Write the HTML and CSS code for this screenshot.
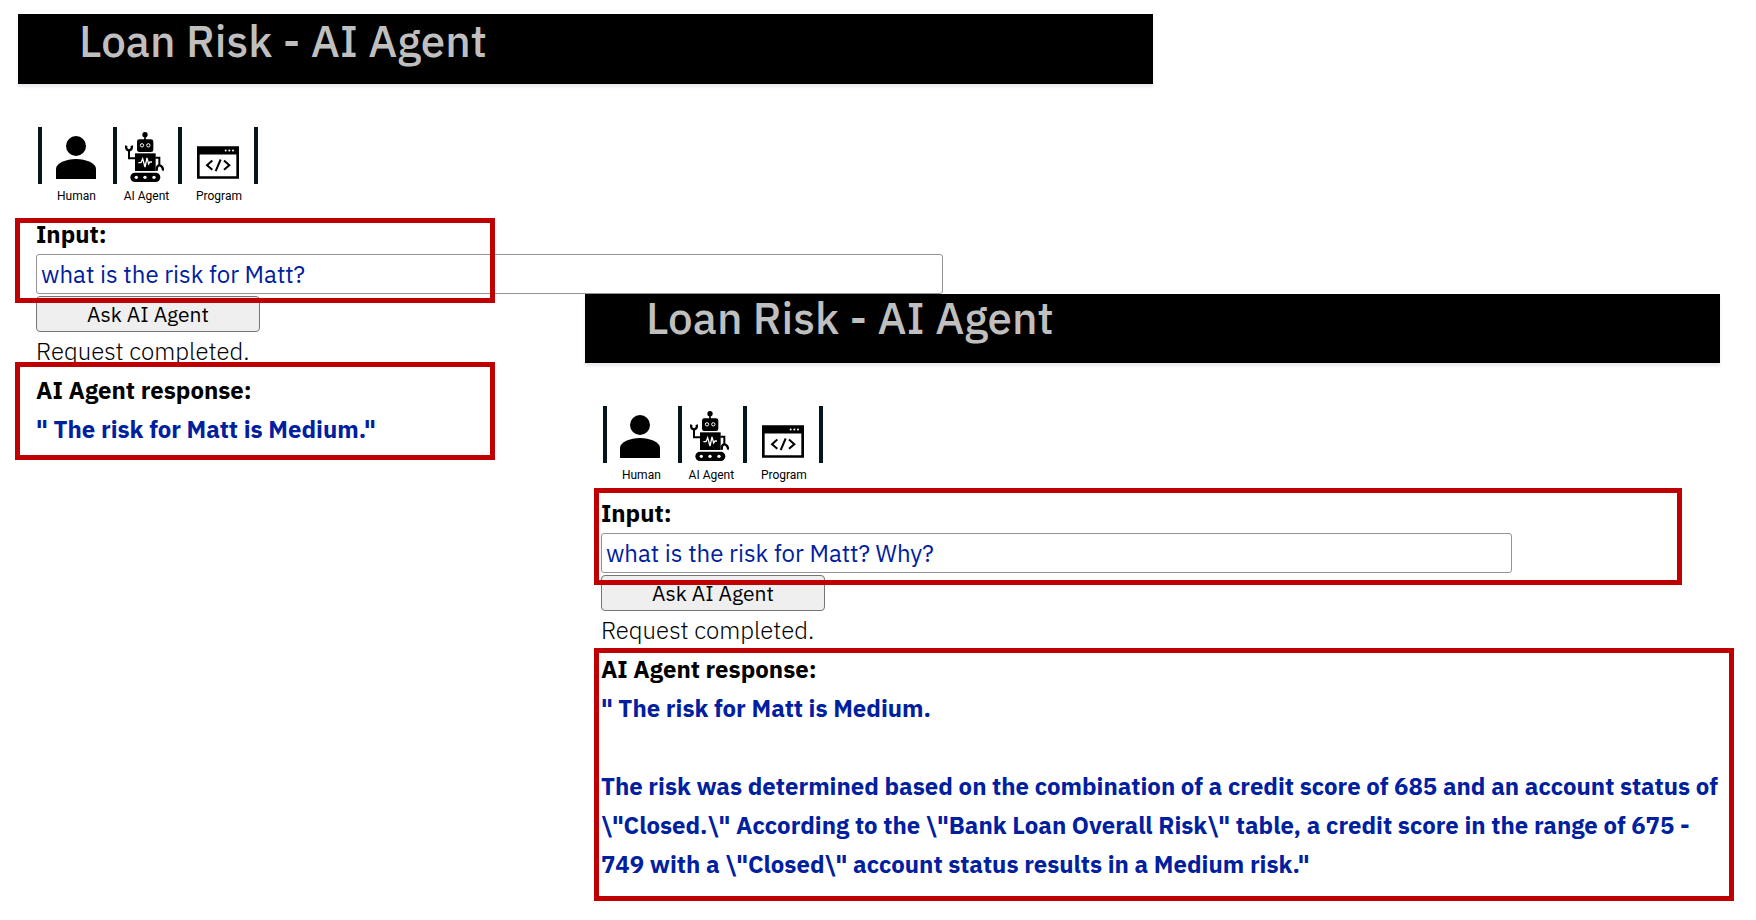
FILE: index.html
```
<!DOCTYPE html>
<html lang="en">
<head>
  <meta charset="utf-8">
  <title>Loan Risk - AI Agent</title>
  <link rel="stylesheet" href="styles.css">
</head>
<body>
  <svg class="sprite" aria-hidden="true">
    <symbol id="icon-human" viewBox="0 0 120 129" preserveAspectRatio="none">
      <ellipse cx="60" cy="30" rx="30" ry="30"/>
      <path d="M0 129V98C0 82 30 69 60 69s60 13 60 29v31z"/>
    </symbol>
    <symbol id="icon-robot" viewBox="0 0 117 150">
      <circle cx="60" cy="8" r="8"/>
      <path d="M60 8v18" stroke="#000" stroke-width="5"/>
      <rect x="36" y="22" width="49" height="38" rx="7"/>
      <g fill="none" stroke="#fff" stroke-width="3">
        <circle cx="51" cy="40" r="5"/>
        <circle cx="70" cy="40" r="5"/>
      </g>
      <rect x="30" y="64" width="62" height="53"/>
      <path d="M40 92h8l5-12 7 25 6-27 5 18 4-6h6" fill="none" stroke="#fff" stroke-width="4"/>
      <g fill="none" stroke="#000" stroke-width="6">
        <path d="M31 79H12V56"/>
        <path d="M4 41c-2 7 1 14 8 14s10-7 8-14" stroke-width="7"/>
        <path d="M91 77h12v22"/>
        <path d="M96 116c-2-8 1-16 7-16s12 8 11 16" stroke-width="7"/>
      </g>
      <rect x="16" y="122" width="90" height="28" rx="14"/>
      <g fill="#fff">
        <circle cx="34" cy="136" r="5"/>
        <circle cx="60" cy="136" r="5"/>
        <circle cx="87" cy="136" r="5"/>
      </g>
    </symbol>
    <symbol id="icon-program" viewBox="0 0 126 98">
      <path d="M0 0h126v98H0zM8 25v65h110V25z" fill-rule="evenodd"/>
      <g fill="#fff">
        <circle cx="86" cy="13" r="3"/>
        <circle cx="97" cy="13" r="3"/>
        <circle cx="108" cy="13" r="3"/>
      </g>
      <path d="M46 43L30 57l16 14M81 43l16 14-16 14M71 40L56 75" fill="none" stroke="#000" stroke-width="6"/>
    </symbol>
  </svg>

  <main class="stage">
    <section class="window window-first">
      <header class="titlebar"><h1 class="title">Loan Risk - AI Agent</h1></header>
      <div class="content">
        <ul class="legend">
          <li class="legend-item legend-human"><span class="legend-figure"><svg class="icon-human"><use href="#icon-human"/></svg></span><span class="legend-label">Human</span></li>
          <li class="legend-item legend-agent"><span class="legend-figure"><svg class="icon-robot"><use href="#icon-robot"/></svg></span><span class="legend-label">AI Agent</span></li>
          <li class="legend-item legend-program"><span class="legend-figure"><svg class="icon-program"><use href="#icon-program"/></svg></span><span class="legend-label">Program</span></li>
        </ul>
        <div class="prompt">
          <label class="heading" for="question-1">Input:</label>
          <input class="question" id="question-1" type="text" value="what is the risk for Matt?">
          <span class="highlight"></span>
        </div>
        <button class="ask" type="button">Ask AI Agent</button>
        <p class="status">Request completed.</p>
        <div class="response">
          <h2 class="heading">AI Agent response:</h2>
          <p class="answer">" The risk for Matt is Medium."</p>
          <span class="highlight"></span>
        </div>
      </div>
    </section>

    <section class="window window-second">
      <header class="titlebar"><h1 class="title">Loan Risk - AI Agent</h1></header>
      <div class="content">
        <ul class="legend">
          <li class="legend-item legend-human"><span class="legend-figure"><svg class="icon-human"><use href="#icon-human"/></svg></span><span class="legend-label">Human</span></li>
          <li class="legend-item legend-agent"><span class="legend-figure"><svg class="icon-robot"><use href="#icon-robot"/></svg></span><span class="legend-label">AI Agent</span></li>
          <li class="legend-item legend-program"><span class="legend-figure"><svg class="icon-program"><use href="#icon-program"/></svg></span><span class="legend-label">Program</span></li>
        </ul>
        <div class="prompt">
          <label class="heading" for="question-2">Input:</label>
          <input class="question" id="question-2" type="text" value="what is the risk for Matt? Why?">
          <span class="highlight"></span>
        </div>
        <button class="ask" type="button">Ask AI Agent</button>
        <p class="status">Request completed.</p>
        <div class="response">
          <h2 class="heading">AI Agent response:</h2>
          <p class="answer">" The risk for Matt is Medium.</p>
          <p class="answer answer-detail">The risk was determined based on the combination of a credit score of 685 and an account status of \"Closed.\" According to the \"Bank Loan Overall Risk\" table, a credit score in the range of 675 - 749 with a \"Closed\" account status results in a Medium risk."</p>
          <span class="highlight"></span>
        </div>
      </div>
    </section>
  </main>
</body>
</html>
```
FILE: styles.css
```
* {
  box-sizing: border-box;
}

body {
  margin: 0;
  background: #fff;
  color: #000;
  font-family: "IBM Plex Sans", Roboto, "Liberation Sans", sans-serif;
  font-size: 24px;
  line-height: 39px;
}

h1, h2, p, ul {
  margin: 0;
  padding: 0;
  font-size: inherit;
}

.sprite {
  display: none;
}

/* Both windows share one grid cell so that the second lies over the first. */
.stage {
  display: grid;
  align-items: start;
  padding: 14px 22px 20px 18px;
}

.window {
  grid-area: 1 / 1;
  width: 66.15%;
}

.window-second {
  justify-self: end;
  margin: 280px 14px 0 0;
}

.titlebar {
  height: 70px;
  padding-left: 61px;
  background: #000;
  box-shadow: 0 3px 3px #e9e9ef;
}

.title {
  color: #bfbfbf;
  font-size: 44px;
  font-weight: 500;
  line-height: 53px;
}

.window-second .titlebar {
  height: 69px;
}

.window-second .title {
  line-height: 48px;
}

.content {
  padding: 43px 0 0 18px;
}

.window-second .content {
  padding-left: 16px;
}

.legend {
  display: flex;
  margin: 0 0 9px 2px;
  list-style: none;
}

.legend-human {
  width: 75px;
}

.legend-agent {
  width: 65px;
}

.legend-program {
  width: 80px;
}

.legend-figure {
  display: flex;
  justify-content: center;
  align-items: flex-end;
  height: 57px;
  padding-bottom: 5px;
  border-left: 4px solid #06141c;
}

.legend-human .legend-figure {
  padding-right: 4px;
}

.legend-agent .legend-figure {
  padding: 0 6px 2px 0;
}

.legend-program .legend-figure {
  border-right: 4px solid #06141c;
}

.legend-label {
  display: block;
  margin-top: 2px;
  padding-left: 2px;
  font-family: Roboto, "Liberation Sans", sans-serif;
  font-size: 12px;
  line-height: 20px;
  text-align: center;
}

.icon-human {
  width: 40px;
  height: 43px;
}

.icon-robot {
  width: 39px;
  height: 50px;
}

.icon-program {
  width: 42px;
  height: 33px;
}

.prompt,
.response {
  position: relative;
}

.heading {
  display: block;
  font-weight: 700;
}

.question {
  display: block;
  width: 81.2%;
  height: 40px;
  padding: 0 4px;
  border: 1px solid #949494;
  border-radius: 3px;
  background: #fff;
  color: #0020a0;
  font: inherit;
}

.window-second .question {
  width: 81.4%;
}

.ask {
  display: block;
  width: 224px;
  height: 36px;
  margin-top: 2px;
  padding: 0;
  border: 1px solid #767676;
  border-radius: 4px;
  background: #efefef;
  color: #000;
  font: inherit;
  font-size: 21px;
  line-height: 34px;
}

.status {
  font-weight: 300;
}

.answer {
  color: #0020a0;
  font-weight: 700;
}

.answer-detail {
  margin-top: 39px;
}

/* Red call-out frames drawn over the windows. */
.highlight {
  position: absolute;
  border: 5px solid #c00000;
  pointer-events: none;
}

.window-first .highlight {
  left: -21px;
  width: 480px;
}

.window-first .prompt .highlight {
  top: 3px;
  bottom: -9px;
}

.window-first .response .highlight {
  top: -9px;
  bottom: -11px;
}

.window-second .prompt .highlight {
  inset: -6px 38px -12px -7px;
}

.window-second .response .highlight {
  inset: -2px -14px -17px -7px;
}
```
